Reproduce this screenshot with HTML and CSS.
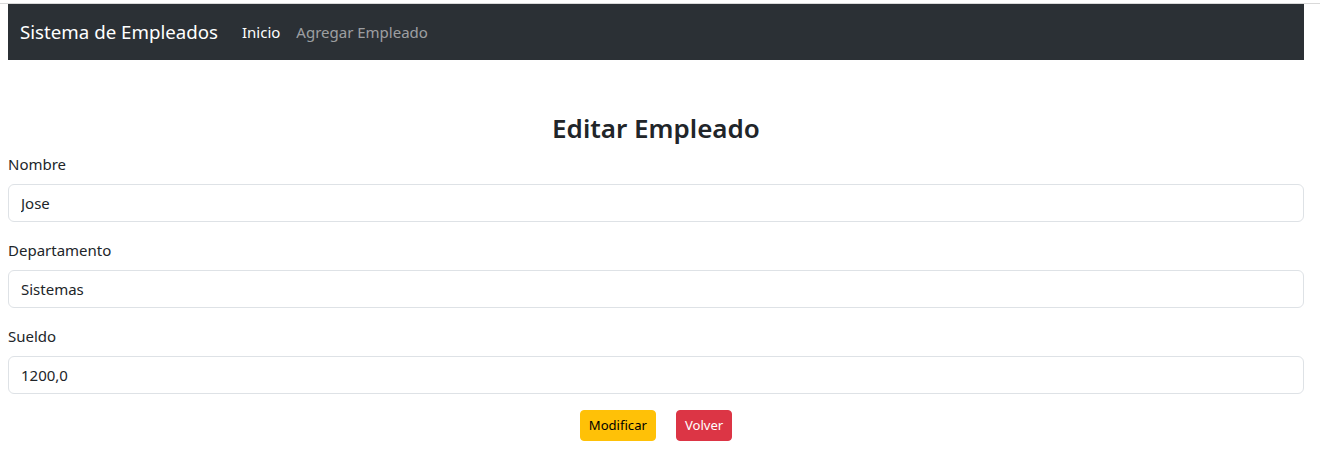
FILE: index.html
```html
<!DOCTYPE html>
<html lang="es">
<head>
<meta charset="utf-8">
<title>Sistema de Empleados</title>
<link rel="stylesheet" href="styles.css">
</head>
<body>
<div class="topline"></div>
<div class="page">
  <nav class="navbar">
    <a class="brand" href="#">Sistema de Empleados</a>
    <ul class="nav">
      <li><a class="nav-link active" href="#">Inicio</a></li>
      <li><a class="nav-link" href="#">Agregar Empleado</a></li>
    </ul>
  </nav>
  <main class="content">
    <h3 class="title">Editar Empleado</h3>
    <form class="form">
      <div class="field">
        <label class="label" for="nombre">Nombre</label>
        <input class="input" id="nombre" type="text" value="Jose">
      </div>
      <div class="field">
        <label class="label" for="departamento">Departamento</label>
        <input class="input" id="departamento" type="text" value="Sistemas">
      </div>
      <div class="field">
        <label class="label" for="sueldo">Sueldo</label>
        <input class="input" id="sueldo" type="text" value="1200,0">
      </div>
      <div class="actions">
        <button type="button" class="btn btn-warning">Modificar</button>
        <button type="button" class="btn btn-danger">Volver</button>
      </div>
    </form>
  </main>
</div>
</body>
</html>
```

FILE: styles.css
```css
* { box-sizing: border-box; }
html, body {
  margin: 0;
  padding: 0;
  background: #fff;
}
body {
  font-family: "Noto Sans", "Open Sans", sans-serif;
  font-size: 15px;
  line-height: 1.5;
  color: #212529;
}
.topline {
  margin-top: 3px;
  height: 1px;
  width: 1320px;
  background: #d9d9d9;
}
.page {
  width: 1296px;
  margin-left: 8px;
}
.navbar {
  display: flex;
  align-items: center;
  height: 56px;
  padding: 8px 12px;
  background: #2b3035;
}
.brand {
  font-size: 18.7px;
  line-height: 30px;
  color: #fff;
  text-decoration: none;
  margin-right: 16px;
  padding: 5px 0;
}
.nav {
  display: flex;
  list-style: none;
  margin: 0;
  padding: 0;
}
.nav-link {
  display: block;
  padding: 8px;
  font-size: 15px;
  line-height: 24px;
  color: rgba(255, 255, 255, 0.55);
  text-decoration: none;
}
.nav-link.active { color: #fff; }
.content {
  padding-top: 52px;
}
.title {
  margin: 0 0 6px;
  text-align: center;
  font-size: 26px;
  font-weight: 600;
  line-height: 33.6px;
}
.form { margin: 0; }
.field { margin-bottom: 16px; }
.label {
  display: block;
  margin-bottom: 8px;
  font-size: 15px;
  line-height: 24px;
}
.input {
  display: block;
  width: 100%;
  height: 38px;
  padding: 6px 12px;
  font-family: inherit;
  font-size: 15px;
  line-height: 24px;
  color: #212529;
  background: #fff;
  border: 1px solid #dee2e6;
  border-radius: 6px;
}
.actions {
  display: flex;
  justify-content: center;
  gap: 20px;
}
.btn {
  font-family: inherit;
  font-size: 13.1px;
  line-height: 21px;
  height: 31px;
  padding: 4px 8px;
  border: 1px solid transparent;
  border-radius: 4px;
  cursor: pointer;
}
.btn-warning {
  background: #ffc107;
  border-color: #ffc107;
  color: #000;
}
.btn-danger {
  background: #dc3545;
  border-color: #dc3545;
  color: #fff;
}
```
